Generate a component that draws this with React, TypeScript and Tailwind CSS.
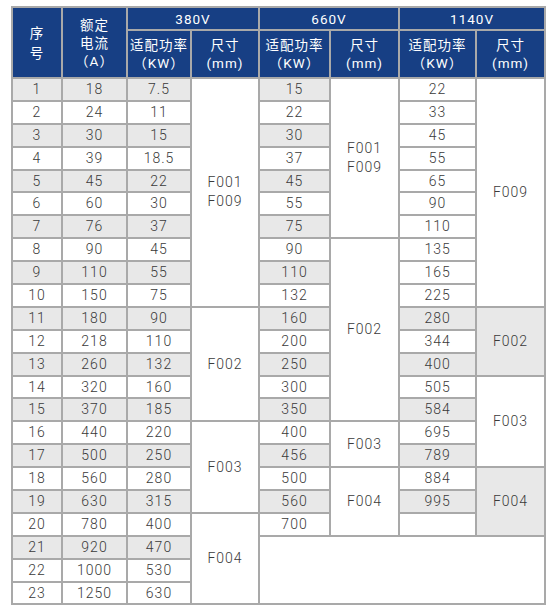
import React from "react";

const current = [18, 24, 30, 39, 45, 60, 76, 90, 110, 150, 180, 218, 260, 320, 370, 440, 500, 560, 630, 780, 920, 1000, 1250];
const kw380 = ["7.5", "11", "15", "18.5", "22", "30", "37", "45", "55", "75", "90", "110", "132", "160", "185", "220", "250", "280", "315", "400", "470", "530", "630"];
const kw660 = ["15", "22", "30", "37", "45", "55", "75", "90", "110", "132", "160", "200", "250", "300", "350", "400", "456", "500", "560", "700"];
const kw1140 = ["22", "33", "45", "55", "65", "90", "110", "135", "165", "225", "280", "344", "400", "505", "584", "695", "789", "884", "995", ""];

// size cells keyed by the row they start on
const size380: Record<number, [string[], number]> = {
  1: [["F001", "F009"], 10],
  11: [["F002"], 5],
  16: [["F003"], 4],
  20: [["F004"], 4],
};
const size660: Record<number, [string[], number]> = {
  1: [["F001", "F009"], 7],
  8: [["F002"], 8],
  16: [["F003"], 2],
  18: [["F004"], 3],
};
const size1140: Record<number, [string[], number, boolean]> = {
  1: [["F009"], 10, false],
  11: [["F002"], 3, true],
  14: [["F003"], 4, false],
  18: [["F004"], 3, true],
};

const td = "border-2 border-[#a9a9a9] text-center align-middle p-0";
const th = "border-2 border-[#a9a9a9] bg-[#173f84] text-white font-normal text-[13.5px] text-center align-middle p-0 leading-[18px]";
const grey = "bg-[#e8e8e8]";

function SizeCell({ lines, span, shaded }: { lines: string[]; span: number; shaded?: boolean }) {
  return (
    <td rowSpan={span} className={`${td} leading-[19px] ${shaded ? grey : "bg-white"}`}>
      {lines.map((l) => (
        <div key={l}>{l}</div>
      ))}
    </td>
  );
}

export default function App() {
  const rows = current.map((c, idx) => {
    const n = idx + 1;
    const leftGrey = n % 2 === 1 && n <= 21;
    const s380 = size380[n];
    const s660 = size660[n];
    const s1140 = size1140[n];
    return (
      <tr key={n} className="h-[22.9px]">
        <td className={`${td} ${leftGrey ? grey : "bg-white"}`}>{n}</td>
        <td className={`${td} ${leftGrey ? grey : "bg-white"}`}>{c}</td>
        <td className={`${td} ${leftGrey ? grey : "bg-white"}`}>{kw380[idx]}</td>
        {s380 && <SizeCell lines={s380[0]} span={s380[1]} />}
        {n <= 20 && (
          <td className={`${td} ${n % 2 === 1 ? grey : "bg-white"}`}>{kw660[idx]}</td>
        )}
        {s660 && <SizeCell lines={s660[0]} span={s660[1]} />}
        {n <= 20 && (
          <td className={`${td} ${n >= 11 && n % 2 === 1 ? grey : "bg-white"}`}>{kw1140[idx]}</td>
        )}
        {s1140 && <SizeCell lines={s1140[0]} span={s1140[1]} shaded={s1140[2]} />}
        {n === 21 && <td rowSpan={3} colSpan={4} className={`${td} bg-white`} />}
      </tr>
    );
  });

  return (
    <div className="w-[552px] h-[612px] bg-white pt-[6px] pl-[11px]" style={{ fontFamily: "Roboto, 'Noto Sans CJK SC', sans-serif" }}>
      <table className="border-collapse table-fixed w-[533px] text-[14px] leading-[17px] font-light tracking-[1px] text-[#3a3a3a]">
        <colgroup>
          <col className="w-[50px]" />
          <col className="w-[65px]" />
          <col className="w-[64px]" />
          <col className="w-[68px]" />
          <col className="w-[71px]" />
          <col className="w-[69px]" />
          <col className="w-[77px]" />
          <col className="w-[69px]" />
        </colgroup>
        <thead>
          <tr className="h-[23px]">
            <th rowSpan={2} className={th}>
              <div>序</div>
              <div className="mt-[2px]">号</div>
            </th>
            <th rowSpan={2} className={th}>
              <div>额定</div>
              <div>电流</div>
              <div>（A）</div>
            </th>
            <th colSpan={2} className={th}>380V</th>
            <th colSpan={2} className={th}>660V</th>
            <th colSpan={2} className={th}>1140V</th>
          </tr>
          <tr className="h-[48px]">
            {[0, 1, 2].map((k) => (
              <React.Fragment key={k}>
                <th className={th}>
                  <div>适配功率</div>
                  <div>（KW）</div>
                </th>
                <th className={th}>
                  <div>尺寸</div>
                  <div>(mm)</div>
                </th>
              </React.Fragment>
            ))}
          </tr>
        </thead>
        <tbody>{rows}</tbody>
      </table>
    </div>
  );
}
